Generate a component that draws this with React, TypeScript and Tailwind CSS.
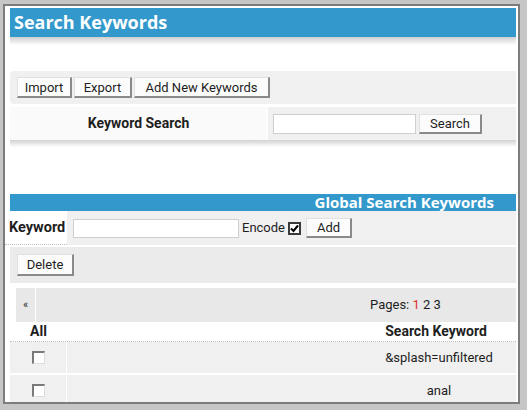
import type { ReactNode } from "react";

function Btn({ w, h = 21, children }: { w: number; h?: number; children: ReactNode }) {
    return (
        <button
            style={{ width: w, height: h }}
            className="flex items-center justify-center bg-[#fcfcfc] border-t border-l border-[#e0e0e0] border-r-2 border-b-2 border-r-[#8a8a8a] border-b-[#8a8a8a] text-[13px] text-[#1e1e1e] leading-none"
        >
            {children}
        </button>
    );
}

function Box({ checked = false }: { checked?: boolean }) {
    if (checked) {
        return (
            <span className="w-[13px] h-[13px] flex items-center justify-center bg-white border-2 border-[#3a3a3a]">
                <svg width="9" height="9" viewBox="0 0 9 9">
                    <path d="M1 4.5 L3.5 7 L8 1.5" stroke="#000" strokeWidth="2" fill="none" />
                </svg>
            </span>
        );
    }
    return <span className="w-[13px] h-[13px] block bg-white border-t-2 border-l-2 border-[#7a7a7a] border-r border-b border-r-[#dcdcdc] border-b-[#dcdcdc]" />;
}

const rows = ["&splash=unfiltered", "anal"];

export default function App() {
    return (
        <div className="w-[527px] h-[410px] overflow-hidden bg-[#c6c6c6] pl-[3px] pt-[4px] pr-[7px] pb-[6px] font-['Roboto',sans-serif] text-[#1e1e1e]">
            <div className="h-full border-2 border-[#7c7c7c] bg-white pl-[5px] pr-[2px] pt-[2px] overflow-hidden flex flex-col">
                {/* page title */}
                <div className="h-[29px] shrink-0 bg-[#3399cc] flex items-center pl-[4px]">
                    <span className="font-['Open_Sans',sans-serif] font-bold text-[18px] text-white">Search Keywords</span>
                </div>
                <div className="h-[8px] shrink-0 bg-gradient-to-b from-[#cfcfcf] to-white" />
                <div className="h-[26px] shrink-0" />

                {/* toolbar */}
                <div className="h-[33px] shrink-0 bg-[#f0f0f0] rounded-l-[4px] flex items-center pl-[7px] gap-[2px]">
                    <Btn w={55}>Import</Btn>
                    <Btn w={58}>Export</Btn>
                    <Btn w={136}>Add New Keywords</Btn>
                </div>
                <div className="h-[3px] shrink-0" />

                {/* keyword search */}
                <div className="h-[33px] shrink-0 flex">
                    <div className="w-[257px] bg-[#fafafa] flex items-center justify-center font-bold text-[14px]">Keyword Search</div>
                    <div className="flex-1 bg-[#f0f0f0] border-l border-white flex items-center pl-[5px] gap-[3px]">
                        <input className="w-[143px] h-[20px] bg-white border border-[#cfcfcf] outline-none" />
                        <Btn w={63} h={20}>Search</Btn>
                    </div>
                </div>
                <div className="h-[7px] shrink-0 bg-gradient-to-b from-[#d2d2d2] to-white" />
                <div className="h-[47px] shrink-0" />

                {/* global keywords */}
                <div className="h-[17px] shrink-0 bg-[#3399cc] flex items-center justify-end pr-[22px]">
                    <span className="font-['Open_Sans',sans-serif] font-bold text-[15px] text-white leading-none">Global Search Keywords</span>
                </div>
                <div className="h-[34px] shrink-0 flex -ml-[5px]">
                    <div className="w-[62px] flex items-center pl-[4px] font-bold text-[14.5px] border-b border-dotted border-[#bdbdbd]">Keyword</div>
                    <div className="flex-1 bg-[#f0f0f0] flex items-center pl-[6px]">
                        <input className="w-[166px] h-[19px] bg-white border border-[#cfcfcf] outline-none" />
                        <span className="ml-[3px] text-[13px]">Encode</span>
                        <span className="ml-[3px]"><Box checked /></span>
                        <span className="ml-[5px]"><Btn w={46} h={20}>Add</Btn></span>
                    </div>
                </div>
                <div className="h-[2px] shrink-0" />
                <div className="h-[36px] shrink-0 bg-[#ebebeb] flex items-center pl-[7px]">
                    <Btn w={57} h={22}>Delete</Btn>
                </div>
                <div className="h-[5px] shrink-0" />

                {/* pagination */}
                <div className="h-[34px] shrink-0 ml-[6px] bg-[#e8e8e8] flex text-[13px]">
                    <div className="w-[20px] border-r border-white flex items-center justify-center text-[11px]">«</div>
                    <div className="flex-1 flex items-center pl-[334px]">
                        Pages:&nbsp;<span className="text-[#e0302a]">1</span>&nbsp;2&nbsp;3
                    </div>
                </div>

                {/* table */}
                <div className="h-[20px] shrink-0 flex items-center font-bold text-[14px] border-b border-dotted border-[#bdbdbd]">
                    <div className="w-[57px] text-center">All</div>
                    <div className="flex-1" />
                    <div className="w-[160px] text-center">Search Keyword</div>
                </div>
                {rows.map((r) => (
                    <div key={r} className="h-[33px] shrink-0 flex bg-[#f0f0f0] border-b-2 border-white text-[13px]">
                        <div className="w-[57px] border-r border-white flex items-center justify-center">
                            <Box />
                        </div>
                        <div className="flex-1" />
                        <div className="w-[160px] flex items-center justify-center pl-[6px]">{r}</div>
                    </div>
                ))}
            </div>
        </div>
    );
}
